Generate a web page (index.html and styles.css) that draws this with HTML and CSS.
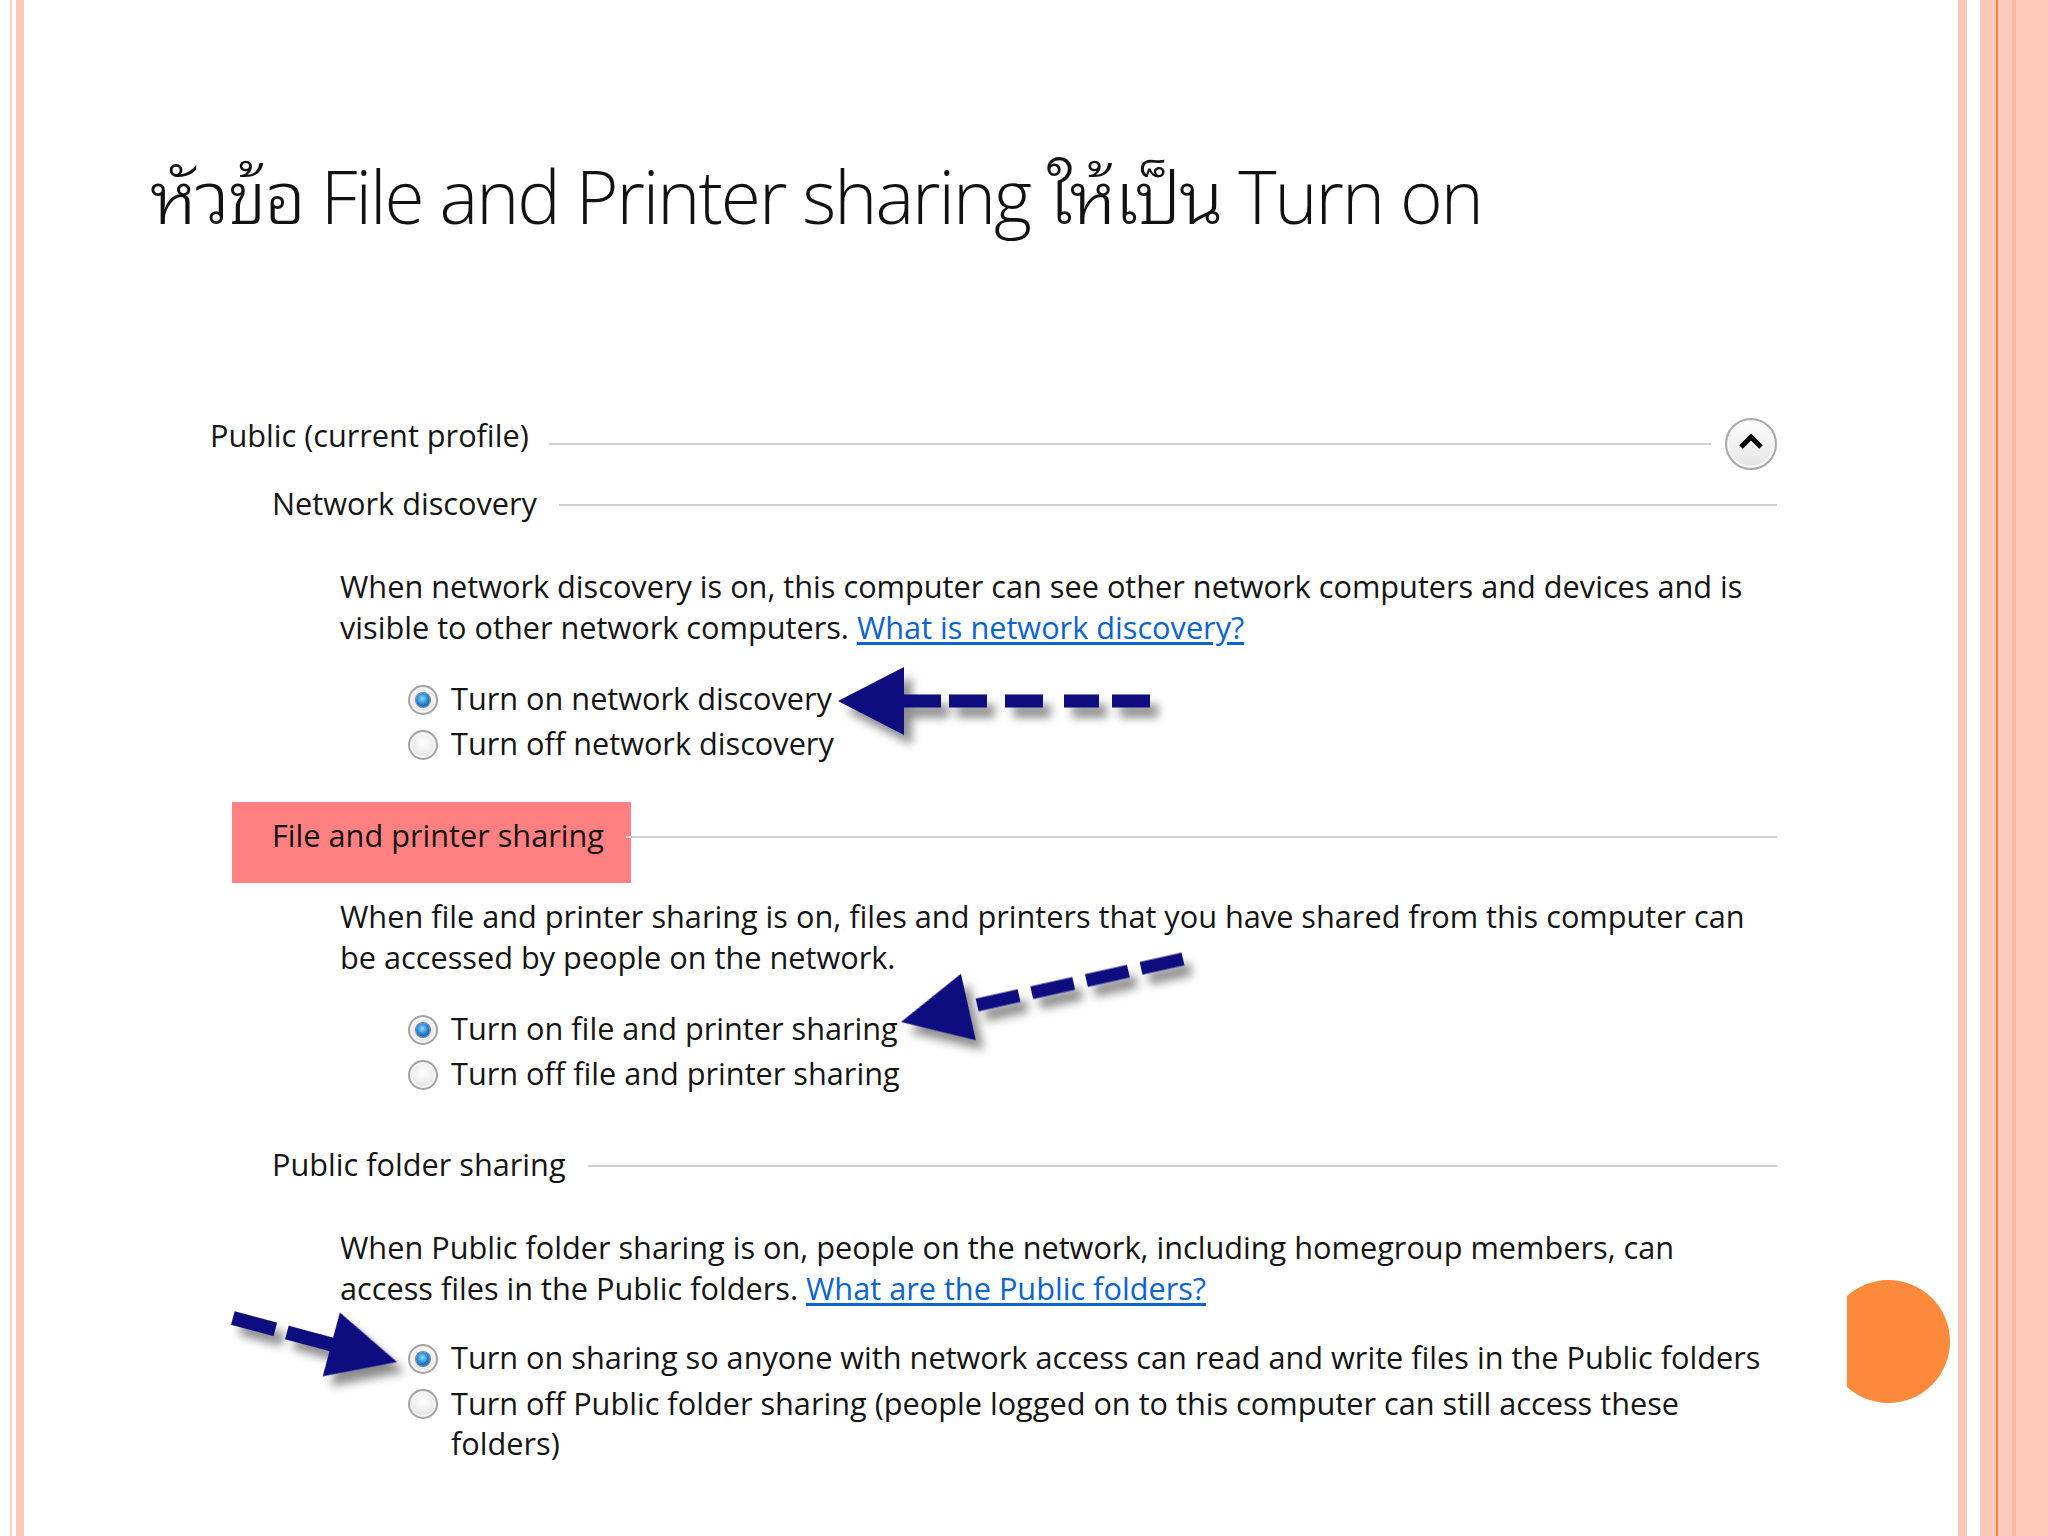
FILE: index.html
```html
<!DOCTYPE html>
<html lang="th">
<head>
<meta charset="utf-8">
<title>File and Printer sharing</title>
<link rel="stylesheet" href="styles.css">
</head>
<body>
<div class="slide">
  <h1 class="title">หัวข้อ File and Printer sharing ให้เป็น Turn on</h1>

  <div class="panel">
    <div class="group-head">
      <span class="gh-label">Public (current profile)</span>
      <span class="rule"></span>
      <span class="collapse">
        <svg width="30" height="20" viewBox="-15 -10 30 20"><path d="M-10 5 L0 -5 L10 5" fill="none" stroke="#000" stroke-width="5" stroke-linejoin="miter"/></svg>
      </span>
    </div>

    <div class="sec-head sec-first">
      <span class="sh-label">Network discovery</span>
      <span class="rule"></span>
    </div>
    <p class="desc d1">When network discovery is on, this computer can see other network computers and devices and is<br>visible to other network computers. <a href="#">What is network discovery?</a></p>
    <div class="options o1">
      <div class="opt"><span class="radio on"></span><span class="opt-text">Turn on network discovery</span></div>
      <div class="opt"><span class="radio"></span><span class="opt-text">Turn off network discovery</span></div>
    </div>

    <div class="sec-head sec-file">
      <span class="sh-label mark">File and printer sharing</span>
      <span class="rule"></span>
    </div>
    <p class="desc d2">When file and printer sharing is on, files and printers that you have shared from this computer can<br>be accessed by people on the network.</p>
    <div class="options o2">
      <div class="opt"><span class="radio on"></span><span class="opt-text">Turn on file and printer sharing</span></div>
      <div class="opt"><span class="radio"></span><span class="opt-text">Turn off file and printer sharing</span></div>
    </div>

    <div class="sec-head sec-public">
      <span class="sh-label">Public folder sharing</span>
      <span class="rule"></span>
    </div>
    <p class="desc d3">When Public folder sharing is on, people on the network, including homegroup members, can<br>access files in the Public folders. <a href="#">What are the Public folders?</a></p>
    <div class="options o3">
      <div class="opt"><span class="radio on"></span><span class="opt-text">Turn on sharing so anyone with network access can read and write files in the Public folders</span></div>
      <div class="opt"><span class="radio"></span><span class="opt-text multi">Turn off Public folder sharing (people logged on to this computer can still access these<br>folders)</span></div>
    </div>
  </div>

  <div class="orange-dot"></div>

  <svg class="arrows" width="2048" height="1536" viewBox="0 0 2048 1536">
    <defs>
      <filter id="sh" x="-30%" y="-60%" width="160%" height="220%">
        <feGaussianBlur in="SourceAlpha" stdDeviation="5"/>
        <feOffset dx="8" dy="10" result="b"/>
        <feFlood flood-color="#000" flood-opacity="0.45"/>
        <feComposite in2="b" operator="in" result="s"/>
        <feMerge><feMergeNode in="s"/><feMergeNode in="SourceGraphic"/></feMerge>
      </filter>
    </defs>
    <g fill="#0b0b80" filter="url(#sh)">
      <g transform="translate(838 701)">
        <polygon points="0,0 66,-34 66,34"/>
        <rect x="60" y="-6.5" width="43" height="13"/>
        <rect x="111" y="-6.5" width="38" height="13"/>
        <rect x="167" y="-6.5" width="38" height="13"/>
        <rect x="226" y="-6.5" width="35" height="13"/>
        <rect x="274" y="-6.5" width="38" height="13"/>
      </g>
      <g transform="translate(901 1022) rotate(-12.6)">
        <polygon points="0,0 69,-34 69,34"/>
        <rect x="78" y="-6.5" width="43" height="13"/>
        <rect x="134" y="-6.5" width="43" height="13"/>
        <rect x="190" y="-6.5" width="43" height="13"/>
        <rect x="246" y="-6.5" width="43" height="13"/>
      </g>
      <g transform="translate(397 1362) rotate(-165)">
        <polygon points="0,0 68,-33 68,33"/>
        <rect x="66" y="-7" width="48" height="14"/>
        <rect x="126" y="-7" width="44" height="14"/>
      </g>
    </g>
  </svg>
</div>
</body>
</html>
```

FILE: styles.css
```css
html, body {
  margin: 0;
  padding: 0;
  background: #ffffff;
}

.slide {
  position: relative;
  z-index: 0;
  width: 2048px;
  height: 1536px;
  overflow: hidden;
  box-sizing: border-box;
  padding-top: 143px;
  font-family: "Open Sans", "Noto Sans", "DejaVu Sans", sans-serif;
  color: #141414;
  background:
    linear-gradient(to right,
      #ffffff 0, #ffffff 10px,
      #fbd2c4 10px, #fbd2c4 12px,
      #ffffff 12px, #ffffff 16px,
      #fcc7b4 16px, #fcc7b4 24px,
      #ffffff 24px, #ffffff 1958px,
      #fcc7b4 1958px, #fcc7b4 1967px,
      #ffffff 1967px, #ffffff 1980px,
      #fdc9b8 1980px, #fdc9b8 1996px,
      #f0873f 1996px, #f0873f 1998px,
      #fdc9b8 1998px, #fdc9b8 2012px,
      #fbbaa3 2012px, #fbbaa3 2016px,
      #fdc9b8 2016px, #fdc9b8 2048px);
}

.title {
  margin: 0 0 0 150px;
  font-family: "Open Sans", "Noto Sans Thai Looped", "Loma", "Garuda", "Waree", "Noto Sans Thai", "Noto Sans", sans-serif;
  font-weight: 300;
  font-size: 73px;
  letter-spacing: -2px;
  line-height: 106px;
  height: 106px;
  color: #111111;
  white-space: nowrap;
}

.panel {
  margin-left: 210px;
  width: 1567px;
  margin-top: 166px;
  font-size: 30.7px;
}

.group-head {
  display: flex;
  align-items: center;
  height: 57px;
}

.gh-label {
  align-self: flex-start;
  line-height: 40px;
  white-space: nowrap;
}

.rule {
  flex: 1;
  height: 2px;
  background: #d0d0d0;
  margin-left: 20px;
}

.collapse {
  width: 52px;
  height: 52px;
  margin-left: 14px;
  box-sizing: border-box;
  border-radius: 50%;
  border: 2px solid #a9a9a9;
  background: linear-gradient(#ffffff, #e4e4e4);
  box-shadow: inset 0 0 0 2px #f7f7f7;
  display: flex;
  align-items: center;
  justify-content: center;
}

.collapse svg {
  display: block;
  margin-top: -3px;
}

.sec-head {
  display: flex;
  align-items: center;
  height: 40px;
  padding-left: 62px;
}

.sec-first { margin-top: 11px; }
.sec-file { margin-top: 49px; }
.sec-public { margin-top: 48px; }

.sh-label {
  line-height: 40px;
  white-space: nowrap;
}

.sec-head .rule {
  margin-left: 22px;
  margin-top: 4px;
}

.mark {
  position: relative;
}

.mark::before {
  content: "";
  position: absolute;
  left: -40px;
  top: -13px;
  width: 399px;
  height: 81px;
  background: #ff8080;
  z-index: -1;
}

.desc {
  margin: 0;
  padding-left: 130px;
  line-height: 41px;
  white-space: nowrap;
}

.d1 { margin-top: 43px; }
.d2 { margin-top: 41px; }
.d3 { margin-top: 43px; }

.desc a {
  color: #0a64d2;
  text-decoration: underline;
  text-underline-offset: 3px;
}

.options {
  padding-left: 198px;
}

.o1 { margin-top: 28px; }
.o2 { margin-top: 28px; }
.o3 { margin-top: 26px; }

.opt {
  display: flex;
  align-items: flex-start;
  line-height: 45px;
}

.opt-text {
  white-space: nowrap;
  margin-left: 13px;
}

.opt-text.multi {
  line-height: 40px;
  padding-top: 2.5px;
}

.radio {
  position: relative;
  flex: none;
  width: 30px;
  height: 30px;
  margin-top: 9px;
  box-sizing: border-box;
  border-radius: 50%;
  border: 2px solid #a3a3a3;
  background: radial-gradient(circle at 50% 40%, #ffffff 0, #efefef 45%, #d3d3d3 100%);
  box-shadow: inset 0 0 0 2px #f5f5f5;
}

.radio.on::after {
  content: "";
  position: absolute;
  left: 6px;
  top: 6px;
  width: 14px;
  height: 14px;
  border-radius: 50%;
  background: radial-gradient(circle at 45% 40%, #8ee0ff 0, #2a8ad6 45%, #0a3f7c 100%);
  box-shadow: 0 0 0 1px #6d7f95;
}

.orange-dot {
  position: absolute;
  left: 1827px;
  top: 1280px;
  width: 123px;
  height: 123px;
  border-radius: 50%;
  background: #fd8a3b;
  clip-path: inset(0 0 0 20px);
}

.arrows {
  position: absolute;
  left: 0;
  top: 0;
  pointer-events: none;
}
```
